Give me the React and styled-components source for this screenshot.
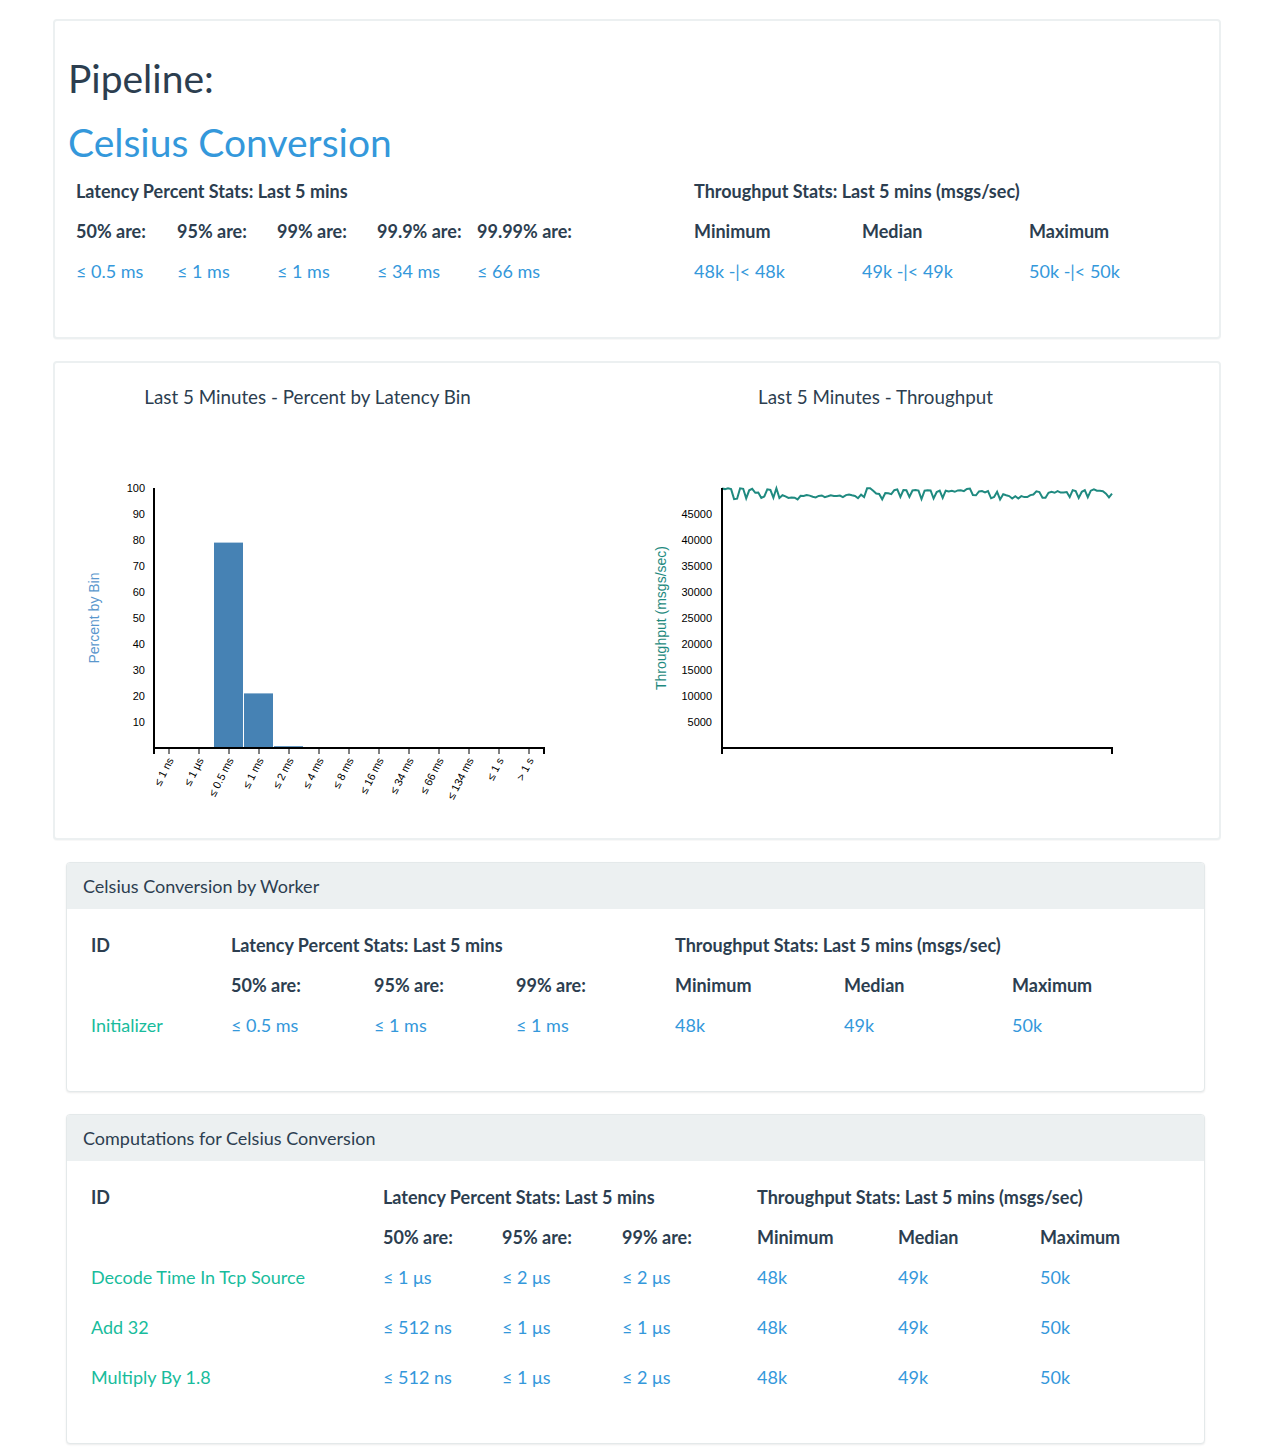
import React from "react";
import styled, { createGlobalStyle } from "styled-components";

const GlobalStyle = createGlobalStyle`
  body {
    margin: 0;
    background: #ffffff;
    font-family: Lato, "Open Sans", sans-serif;
    color: #2c3e50;
  }
  * { box-sizing: border-box; }
`;

const Page = styled.div`
  width: 1221px;
  padding: 19px 0 12px 53px;
  display: flex;
  flex-direction: column;
  gap: 22px;
`;

const Card = styled.section`
  border: 2px solid #ecf0f1;
  border-radius: 4px;
  background: #fff;
  box-shadow: 0 1px 1px rgba(0, 0, 0, 0.03);
`;

const SummaryCard = styled(Card)`
  padding: 35px 13px 46px;
`;

const PageTitle = styled.h1`
  margin: 0;
  font-size: 39px;
  line-height: 44px;
  font-weight: 400;
  color: #2c3e50;
`;

const PipelineName = styled(PageTitle)`
  margin-top: 20px;
  color: #3498db;
`;

const StatsTable = styled.div`
  margin: 7px 0 0 8px;
`;

const StatRow = styled.div`
  display: grid;
  grid-template-columns: ${(p) => p.cols};
  height: 40px;
  align-items: center;
  font-size: 18px;
`;

const DataRow = styled(StatRow)`
  & + & {
    margin-top: 10px;
  }
`;

const Cell = styled.div`
  grid-column: span ${(p) => p.span || 1};
  white-space: nowrap;
  font-weight: ${(p) => (p.head ? 700 : 400)};
  color: ${(p) =>
    p.tone === "value" ? "#3498db" : p.tone === "id" ? "#18bc9c" : "#2c3e50"};
`;

const ChartsCard = styled(Card)`
  display: flex;
  padding: 0 0 18px 15px;
`;

const ChartBlock = styled.div`
  width: 568px;
  display: flex;
  flex-direction: column;
`;

const ChartTitle = styled.div`
  width: 475px;
  margin-top: 22px;
  text-align: center;
  font-size: 18.8px;
  line-height: 24px;
`;

const Panel = styled.section`
  margin-left: 13px;
  width: 1139px;
  border: 1px solid #e4e9ea;
  border-radius: 4px;
  box-shadow: 0 1px 2px rgba(0, 0, 0, 0.08);
  background: #fff;
  overflow: hidden;
`;

const PanelHeading = styled.div`
  height: 46px;
  display: flex;
  align-items: center;
  padding: 0 0 1px 16px;
  background: #ecf0f1;
  font-size: 18px;
`;

const PanelBody = styled.div`
  padding: 16px 24px 46px;
`;

const AxisText = styled.text`
  font-family: "Liberation Sans", Arial, sans-serif;
  font-size: 11px;
  fill: #000;
`;

const AxisLabel = styled.text`
  font-family: "Liberation Sans", Arial, sans-serif;
  font-size: 14px;
  fill: ${(p) => p.color};
`;

const PLOT = { left: 84, top: 79, width: 390, height: 260 };
const BOTTOM = PLOT.top + PLOT.height;

const bins = [
  { label: "≤ 1 ns", value: 0 },
  { label: "≤ 1 µs", value: 0 },
  { label: "≤ 0.5 ms", value: 79 },
  { label: "≤ 1 ms", value: 21 },
  { label: "≤ 2 ms", value: 0.7 },
  { label: "≤ 4 ms", value: 0.35 },
  { label: "≤ 8 ms", value: 0.3 },
  { label: "≤ 16 ms", value: 0 },
  { label: "≤ 34 ms", value: 0.35 },
  { label: "≤ 66 ms", value: 0 },
  { label: "≤ 134 ms", value: 0 },
  { label: "≤ 1 s", value: 0 },
  { label: "> 1 s", value: 0 },
];

// msgs/sec samples for the last 5 minutes, jittering between ~47.7k and 50k
const throughput = (() => {
  let seed = 29;
  const rand = () => {
    seed = (seed * 9301 + 49297) % 233280;
    return seed / 233280;
  };
  const out = [];
  let level = 49600;
  for (let i = 0; i < 130; i++) {
    const r = rand();
    if (r < 0.22) {
      out.push(47800 + rand() * 500);
      continue;
    }
    if (r < 0.45) level = 48300 + rand() * 1650;
    out.push(Math.min(49950, level + (rand() - 0.5) * 350));
  }
  out[0] = 49900;
  out[out.length - 1] = 48900;
  return out;
})();

const XAxis = () => (
  <path
    d={`M${PLOT.left},${BOTTOM + 6}V${BOTTOM}H${PLOT.left + PLOT.width}V${BOTTOM + 6}`}
    fill="none"
    stroke="#000"
    strokeWidth="2"
  />
);

const YAxis = () => (
  <line
    x1={PLOT.left}
    y1={PLOT.top}
    x2={PLOT.left}
    y2={BOTTOM}
    stroke="#000"
    strokeWidth="2"
  />
);

const LatencyHistogram = () => {
  const band = PLOT.width / bins.length;
  const scale = PLOT.height / 100;
  return (
    <svg width="568" height="411">
      {bins.map((b, i) =>
        b.value > 0 ? (
          <rect
            key={b.label}
            x={PLOT.left + i * band}
            y={BOTTOM - b.value * scale}
            width={band - 1}
            height={b.value * scale}
            fill="#4682b4"
          />
        ) : null
      )}
      {[10, 20, 30, 40, 50, 60, 70, 80, 90, 100].map((t) => (
        <AxisText key={t} x={PLOT.left - 9} y={BOTTOM - t * scale} dy="0.32em" textAnchor="end">
          {t}
        </AxisText>
      ))}
      {bins.map((b, i) => {
        const cx = PLOT.left + band * (i + 0.5);
        return (
          <g key={b.label}>
            <line x1={cx} y1={BOTTOM} x2={cx} y2={BOTTOM + 6} stroke="#000" />
            <AxisText
              textAnchor="end"
              transform={`translate(${cx + 5},${BOTTOM + 12}) rotate(-63)`}
            >
              {b.label}
            </AxisText>
          </g>
        );
      })}
      <YAxis />
      <XAxis />
      <AxisLabel
        color="#5a97cd"
        textAnchor="middle"
        transform={`translate(29,${PLOT.top + PLOT.height / 2}) rotate(-90)`}
      >
        Percent by Bin
      </AxisLabel>
    </svg>
  );
};

const ThroughputChart = () => {
  const yFor = (v) => BOTTOM - (v / 50000) * PLOT.height;
  const step = PLOT.width / (throughput.length - 1);
  const d = throughput
    .map((v, i) => `${i ? "L" : "M"}${(PLOT.left + i * step).toFixed(1)},${yFor(v).toFixed(1)}`)
    .join("");
  const ticks = [5000, 10000, 15000, 20000, 25000, 30000, 35000, 40000, 45000];
  return (
    <svg width="568" height="411">
      {ticks.map((t) => (
        <AxisText key={t} x={PLOT.left - 10} y={yFor(t)} dy="0.32em" textAnchor="end">
          {t}
        </AxisText>
      ))}
      <path d={d} fill="none" stroke="#1f8a80" strokeWidth="2" />
      <YAxis />
      <XAxis />
      <AxisLabel
        color="#1f8a80"
        textAnchor="middle"
        transform={`translate(28,${PLOT.top + PLOT.height / 2}) rotate(-90)`}
      >
        Throughput (msgs/sec)
      </AxisLabel>
    </svg>
  );
};

const StatsHeader = ({ cols, withId, latencyCols }) => (
  <>
    <StatRow cols={cols}>
      {withId && <Cell head>ID</Cell>}
      <Cell head span={latencyCols.length}>
        Latency Percent Stats: Last 5 mins
      </Cell>
      <Cell head span={3}>
        Throughput Stats: Last 5 mins (msgs/sec)
      </Cell>
    </StatRow>
    <StatRow cols={cols}>
      {withId && <Cell />}
      {latencyCols.map((c) => (
        <Cell head key={c}>
          {c}
        </Cell>
      ))}
      <Cell head>Minimum</Cell>
      <Cell head>Median</Cell>
      <Cell head>Maximum</Cell>
    </StatRow>
  </>
);

const summaryCols = "101px 100px 100px 100px 217px 168px 167px 1fr";
const workerCols = "140px 143px 142px 159px 169px 168px 1fr";
const computationCols = "292px 119px 120px 135px 141px 142px 1fr";

const pctThree = ["50% are:", "95% are:", "99% are:"];

const computations = [
  { id: "Decode Time In Tcp Source", lat: ["≤ 1 μs", "≤ 2 μs", "≤ 2 μs"] },
  { id: "Add 32", lat: ["≤ 512 ns", "≤ 1 μs", "≤ 1 μs"] },
  { id: "Multiply By 1.8", lat: ["≤ 512 ns", "≤ 1 μs", "≤ 2 μs"] },
];

const StatsPanel = ({ title, cols, rows }) => (
  <Panel>
    <PanelHeading>{title}</PanelHeading>
    <PanelBody>
      <StatsHeader cols={cols} withId latencyCols={pctThree} />
      {rows.map((r) => (
        <DataRow cols={cols} key={r.id}>
          <Cell tone="id">{r.id}</Cell>
          {r.lat.map((v, i) => (
            <Cell tone="value" key={i}>
              {v}
            </Cell>
          ))}
          <Cell tone="value">48k</Cell>
          <Cell tone="value">49k</Cell>
          <Cell tone="value">50k</Cell>
        </DataRow>
      ))}
    </PanelBody>
  </Panel>
);

export default function App() {
  return (
    <>
      <GlobalStyle />
      <Page>
        <SummaryCard>
          <PageTitle>Pipeline:</PageTitle>
          <PipelineName>Celsius Conversion</PipelineName>
          <StatsTable>
            <StatsHeader
              cols={summaryCols}
              latencyCols={["50% are:", "95% are:", "99% are:", "99.9% are:", "99.99% are:"]}
            />
            <StatRow cols={summaryCols}>
              {["≤ 0.5 ms", "≤ 1 ms", "≤ 1 ms", "≤ 34 ms", "≤ 66 ms"].map((v, i) => (
                <Cell tone="value" key={i}>
                  {v}
                </Cell>
              ))}
              <Cell tone="value">48k -|&lt; 48k</Cell>
              <Cell tone="value">49k -|&lt; 49k</Cell>
              <Cell tone="value">50k -|&lt; 50k</Cell>
            </StatRow>
          </StatsTable>
        </SummaryCard>

        <ChartsCard>
          <ChartBlock>
            <ChartTitle>Last 5 Minutes - Percent by Latency Bin</ChartTitle>
            <LatencyHistogram />
          </ChartBlock>
          <ChartBlock>
            <ChartTitle>Last 5 Minutes - Throughput</ChartTitle>
            <ThroughputChart />
          </ChartBlock>
        </ChartsCard>

        <StatsPanel
          title="Celsius Conversion by Worker"
          cols={workerCols}
          rows={[{ id: "Initializer", lat: ["≤ 0.5 ms", "≤ 1 ms", "≤ 1 ms"] }]}
        />
        <StatsPanel
          title="Computations for Celsius Conversion"
          cols={computationCols}
          rows={computations}
        />
      </Page>
    </>
  );
}
